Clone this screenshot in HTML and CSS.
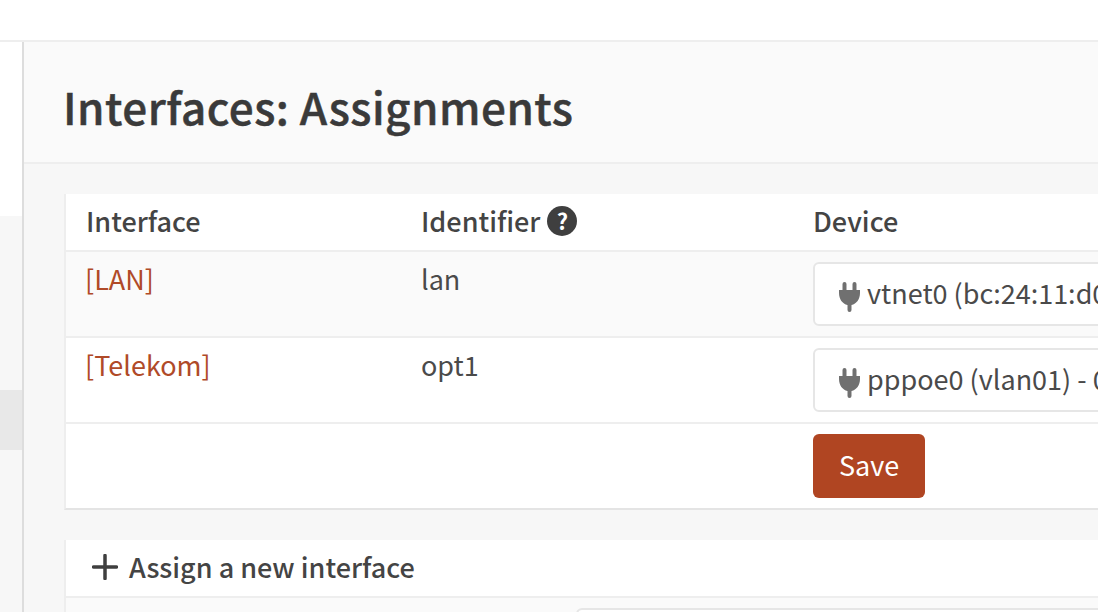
FILE: index.html
```html
<!DOCTYPE html>
<html lang="en">
<head>
<meta charset="utf-8">
<title>Interfaces: Assignments</title>
<link rel="stylesheet" href="styles.css">
</head>
<body>
<header class="topbar"></header>
<div class="layout">
  <aside class="sidebar">
    <div class="side-top"></div>
    <div class="side-gray"></div>
    <div class="side-active"></div>
    <div class="side-rest"></div>
  </aside>
  <main class="main">
    <div class="page-title"><h1>Interfaces: Assignments</h1></div>
    <div class="content">
      <section class="card assign">
        <div class="row head">
          <div>Interface</div>
          <div class="id-head">Identifier <span class="help">?</span></div>
          <div>Device</div>
        </div>
        <div class="row alt">
          <div><a class="link" href="#">[LAN]</a></div>
          <div>lan</div>
          <div class="select">
            <svg class="plug" viewBox="0 0 21 30"><path d="M3.500 2a2 2 0 0 1 4 0v6h-4zM13.500 2a2 2 0 0 1 4 0v6h-4zM0 8h21v3c0 6-3.500 11-8.500 12v5a2 2 0 0 1-4 0v-5C3.500 22 0 17 0 11z"/></svg>
            <span class="sel-text">vtnet0 (bc:24:11:d0:5e:21)</span>
          </div>
        </div>
        <div class="row">
          <div><a class="link" href="#">[Telekom]</a></div>
          <div>opt1</div>
          <div class="select">
            <svg class="plug" viewBox="0 0 21 30"><path d="M3.500 2a2 2 0 0 1 4 0v6h-4zM13.500 2a2 2 0 0 1 4 0v6h-4zM0 8h21v3c0 6-3.500 11-8.500 12v5a2 2 0 0 1-4 0v-5C3.500 22 0 17 0 11z"/></svg>
            <span class="sel-text">pppoe0 (vlan01) - 00:00:00</span>
          </div>
        </div>
        <div class="row last">
          <div></div>
          <div></div>
          <div><button class="save" type="button">Save</button></div>
        </div>
      </section>
      <section class="card new">
        <div class="new-head">
          <svg class="plus" viewBox="0 0 26 26"><path d="M13 1.500v23M1.500 13h23"/></svg>
          <span>Assign a new interface</span>
        </div>
        <div class="new-row"><div class="new-select"></div></div>
      </section>
    </div>
  </main>
</div>
</body>
</html>
```
FILE: styles.css
```css
* { box-sizing: border-box; }
html, body { margin: 0; height: 100%; overflow: hidden; background: #fff; }
body {
  font-family: "Noto Sans CJK SC", "Source Sans Pro", "Open Sans", sans-serif;
  font-size: 27px;
  color: #4a4a4a;
  line-height: 40px;
}
.topbar { height: 42px; border-bottom: 2px solid #eeeeee; background: #fff; }
.layout { display: flex; height: 570px; }
.sidebar {
  width: 24px;
  flex: none;
  border-right: 2px solid #dddddd;
  display: flex;
  flex-direction: column;
}
.side-top { height: 174px; background: #fff; }
.side-gray { height: 174px; background: #f7f7f7; }
.side-active { height: 60px; background: #e8e8e8; }
.side-rest { flex: 1; background: #f7f7f7; }
.main { flex: 1; min-width: 0; overflow: hidden; background: #f7f7f7; }
.page-title {
  height: 122px;
  background: #fafafa;
  border-bottom: 2px solid #eeeeee;
  padding: 38px 0 0 39px;
}
h1 {
  margin: 0;
  font-size: 44px;
  line-height: 52px;
  font-weight: 500;
  letter-spacing: 0.5px;
  -webkit-text-stroke: 0.5px #3a3a3a;
  color: #3a3a3a;
}
.content { padding: 30px 0 0 40px; }
.card {
  width: 1100px;
  background: #fff;
  border-left: 2px solid #eeeeee;
}
.assign { border-bottom: 2px solid #e4e4e4; }
.new { margin-top: 30px; }
.row {
  display: grid;
  grid-template-columns: 335px 392px 1fr;
  height: 86px;
  padding: 7px 0 0 20px;
  border-bottom: 2px solid #eeeeee;
}
.row.alt { background: #fafafa; }
.row.last { height: 84px; border-bottom: 0; padding-top: 10px; }
.row.head {
  height: 58px;
  padding-top: 7px;
  font-weight: 500;
  color: #444444;
}
.id-head { display: flex; align-items: flex-start; gap: 7px; }
.help {
  width: 30px;
  height: 30px;
  margin-top: 5px;
  border-radius: 50%;
  background: #3f3f3f;
  color: #fff;
  font-size: 22px;
  font-weight: 700;
  line-height: 29px;
  text-align: center;
}
.link { color: #b04a28; text-decoration: none; margin-left: -1px; }
.select {
  width: 600px;
  height: 64px;
  margin-top: 3px;
  border: 2px solid #e6e6e6;
  border-radius: 6px;
  background: #fff;
  padding: 9px 0 0 24px;
  display: flex;
  align-items: flex-start;
  gap: 7px;
  white-space: nowrap;
  overflow: hidden;
}
.plug { width: 21px; height: 30px; margin-top: 9px; flex: none; fill: #707070; }
.save {
  width: 112px;
  height: 64px;
  border: 0;
  border-radius: 6px;
  background: #b04522;
  color: #fff;
  font: inherit;
  padding: 0 0 2px 0;
}
.new-head {
  height: 58px;
  display: flex;
  align-items: center;
  gap: 11px;
  padding: 0 0 2px 26px;
  border-bottom: 2px solid #eeeeee;
  font-weight: 500;
  color: #444444;
}
.plus { width: 26px; height: 26px; fill: none; stroke: #3f3f3f; stroke-width: 3.500; stroke-linecap: round; }
.new-row { height: 40px; background: #fafafa; padding: 10px 0 0 510px; }
.new-select { height: 60px; border: 2px solid #e6e6e6; border-radius: 6px; background: #fff; }
```
